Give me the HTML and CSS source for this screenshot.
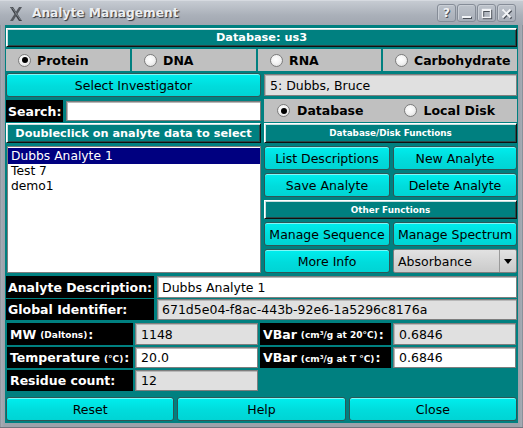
FILE: index.html
```html
<!DOCTYPE html>
<html>
<head>
<meta charset="utf-8">
<title>Analyte Management</title>
<link rel="stylesheet" href="styles.css">
</head>
<body>
<div class="window">
  <div class="titlebar">
    <svg class="appicon" width="16" height="16" viewBox="0 0 16 16">
      <path d="M2 1 L5 1 L14 15 L11 15 Z" fill="#3c4045"/>
      <path d="M11 1 L14 1 L5 15 L2 15 Z" fill="#55595f"/>
      <path d="M3 2 L4.5 2 L12.5 14" stroke="#8a9098" stroke-width="0.8" fill="none"/>
    </svg>
    <span class="title">Analyte Management</span>
    <div class="tbuttons">
      <span class="tbtn q">?</span>
      <span class="tbtn"><svg width="11" height="11" viewBox="0 0 11 11"><rect x="1" y="8" width="9" height="2" fill="#f2f4f7"/></svg></span>
      <span class="tbtn"><svg width="11" height="11" viewBox="0 0 11 11"><rect x="1.5" y="1.5" width="8" height="8" fill="none" stroke="#f2f4f7" stroke-width="1.4"/><rect x="1" y="1" width="9" height="2" fill="#f2f4f7"/></svg></span>
      <span class="tbtn"><svg width="11" height="11" viewBox="0 0 11 11"><path d="M1.5 1.5 L9.5 9.5 M9.5 1.5 L1.5 9.5" stroke="#f2f4f7" stroke-width="2"/></svg></span>
    </div>
  </div>

  <div class="content">
    <div class="banner big row-db">Database: us3</div>

    <div class="radios4 row-type">
      <div class="radio"><span class="circle on"></span>Protein</div>
      <div class="radio"><span class="circle"></span>DNA</div>
      <div class="radio"><span class="circle"></span>RNA</div>
      <div class="radio"><span class="circle"></span>Carbohydrate</div>
    </div>

    <div class="cols row-inv">
      <div class="btn">Select Investigator</div>
      <div class="field gray inv">5: Dubbs, Bruce</div>
    </div>

    <div class="cols row-search">
      <div class="search">
        <span class="lbl">Search:</span>
        <div class="field white"></div>
      </div>
      <div class="radios2">
        <div class="radio"><span class="circle on"></span>Database</div>
        <div class="radio"><span class="circle"></span>Local Disk</div>
      </div>
    </div>

    <div class="cols row-hdr">
      <div class="banner big">Doubleclick on analyte data to select</div>
      <div class="banner small">Database/Disk Functions</div>
    </div>

    <div class="cols row-main">
      <div class="list">
        <div class="item sel">Dubbs Analyte 1</div>
        <div class="item">Test 7</div>
        <div class="item">demo1</div>
      </div>
      <div class="funcs">
        <div class="btn">List Descriptions</div>
        <div class="btn">New Analyte</div>
        <div class="btn">Save Analyte</div>
        <div class="btn">Delete Analyte</div>
        <div class="banner small span2">Other Functions</div>
        <div class="btn">Manage Sequence</div>
        <div class="btn">Manage Spectrum</div>
        <div class="btn">More Info</div>
        <div class="combo"><span class="ctext">Absorbance</span><span class="carrow"><svg width="8" height="5" viewBox="0 0 8 5"><path d="M0 0 L8 0 L4 5 Z" fill="#000"/></svg></span></div>
      </div>
    </div>

    <div class="desc row-desc">
      <span class="lbl">Analyte Description:</span>
      <div class="field white">Dubbs Analyte 1</div>
    </div>
    <div class="desc row-gid">
      <span class="lbl">Global Identifier:</span>
      <div class="field gray">671d5e04-f8ac-443b-92e6-1a5296c8176a</div>
    </div>

    <div class="props">
      <span class="lbl pl">MW <span class="sm">(Daltons)</span>:</span>
      <div class="field gray">1148</div>
      <span class="lbl pl">VBar <span class="sm">(cm³/g at 20°C)</span>:</span>
      <div class="field gray">0.6846</div>

      <span class="lbl pl">Temperature <span class="sm">(°C)</span>:</span>
      <div class="field white">20.0</div>
      <span class="lbl pl">VBar <span class="sm">(cm³/g at T °C)</span>:</span>
      <div class="field white">0.6846</div>

      <span class="lbl pl">Residue count:</span>
      <div class="field gray">12</div>
    </div>

    <div class="bottom">
      <div class="btn">Reset</div>
      <div class="btn">Help</div>
      <div class="btn">Close</div>
    </div>
  </div>
</div>
</body>
</html>
```

FILE: styles.css
```css
html, body {
  margin: 0;
  padding: 0;
  background: #9ea4ad;
}

body {
  font-family: "DejaVu Sans", "Liberation Sans", sans-serif;
  font-size: 12.5px;
  color: #000;
}

.window {
  width: 523px;
  height: 428px;
  box-sizing: border-box;
  display: flex;
  flex-direction: column;
  background: linear-gradient(90deg, #7d838c 0, #a6acb5 1px, #9ca2ab 4px, #9ca2ab calc(100% - 4px), #a6acb5 calc(100% - 1px), #6f757e 100%);
  border-bottom: 1px solid #6f757e;
}

/* ---------- title bar ---------- */
.titlebar {
  height: 25px;
  flex: none;
  display: flex;
  align-items: center;
  padding: 0 7px 0 8px;
  background: linear-gradient(#c6cbd2, #aab0b9 60%, #a0a6b0);
  border-top: 1px solid #d6dae0;
  box-sizing: border-box;
}

.appicon {
  flex: none;
  margin-top: 1px;
}

.title {
  margin-left: 8px;
  font-weight: bold;
  font-size: 12.2px;
  color: #eceef1;
  text-shadow: 1px 1px 1px #2c3036;
}

.tbuttons {
  margin-left: auto;
  display: flex;
  gap: 1px;
}

.tbtn {
  box-sizing: border-box;
  width: 19px;
  height: 18px;
  border: 1px solid #858c97;
  border-radius: 3px;
  background: linear-gradient(#bcc2ca, #a8aeb8);
  box-shadow: inset 1px 1px 0 #c9ced5;
  display: flex;
  align-items: center;
  justify-content: center;
}

.tbtn svg {
  filter: drop-shadow(1px 1px 0 #4a5058);
}

.tbtn.q {
  font-weight: bold;
  font-size: 12px;
  color: #f2f4f7;
  text-shadow: 1px 1px 0 #4a5058;
}

/* ---------- content ---------- */
.content {
  flex: 1;
  margin: 0 5px 4px;
  padding: 3px 1px 2px;
  background: #008080;
  display: flex;
  flex-direction: column;
}

.banner {
  box-sizing: border-box;
  background: #008080;
  color: #fff;
  font-weight: bold;
  display: flex;
  align-items: center;
  justify-content: center;
  border: 1px solid;
  border-color: #ffffff #101010 #101010 #ffffff;
  box-shadow: inset 1px 1px 0 #c8dede, inset -1px -1px 0 #2c4a4a;
  white-space: nowrap;
}

.banner.big {
  font-size: 11.3px;
}

.banner.small {
  font-size: 8.8px;
}

.row-db {
  height: 19px;
}

.radios4 {
  margin-top: 2px;
  height: 22px;
  display: grid;
  grid-template-columns: 124px 124px 123px 1fr;
  gap: 2px;
}

.radio {
  background: #c0c0c0;
  display: flex;
  align-items: center;
  padding-left: 12px;
  font-weight: bold;
  font-size: 12.5px;
  gap: 6px;
}

.circle {
  box-sizing: border-box;
  width: 13px;
  height: 13px;
  border-radius: 50%;
  border: 1px solid #7c7c7c;
  background: radial-gradient(circle at 45% 40%, #ffffff 0, #f4f4f4 45%, #d4d4d4 100%);
  display: flex;
  align-items: center;
  justify-content: center;
  flex: none;
}

.circle.on::after {
  content: "";
  width: 6px;
  height: 6px;
  border-radius: 50%;
  background: #000;
}

.cols {
  display: grid;
  grid-template-columns: 255px 1fr;
  column-gap: 3px;
}

.row-inv {
  margin-top: 2px;
  height: 24px;
  align-items: center;
}

.btn {
  box-sizing: border-box;
  height: 24px;
  border: 1px solid #2f5656;
  border-radius: 3px;
  background: linear-gradient(#00eeee, #00dcdc 55%, #00d4d4);
  box-shadow: inset 0 1px 0 #7ff8f8;
  display: flex;
  align-items: center;
  justify-content: center;
  white-space: nowrap;
}

.field {
  box-sizing: border-box;
  border: 1px solid #7e7e7e;
  box-shadow: inset 1px 1px 0 #b8b8b8;
  display: flex;
  align-items: center;
  padding-left: 4px;
  white-space: nowrap;
  overflow: hidden;
}

.field.white {
  background: #ffffff;
}

.field.gray {
  background: #e0e0e0;
}

.field.inv {
  height: 22px;
  padding-left: 5px;
}

.row-search {
  margin-top: 3px;
  height: 21px;
}

.search {
  display: flex;
  gap: 3px;
}

.lbl {
  background: #000;
  color: #fff;
  font-weight: bold;
  font-size: 12.5px;
  display: flex;
  align-items: center;
  padding-left: 2px;
  white-space: nowrap;
}

.search .lbl {
  width: 57px;
  box-sizing: border-box;
  flex: none;
}

.search .field {
  flex: 1;
  margin: 1px 0 1px 0;
}

.radios2 {
  display: grid;
  grid-template-columns: 1fr 1fr;
  background: #c0c0c0;
  margin-top: -1px;
  height: 23px;
}

.radios2 .radio {
  padding-left: 13px;
  gap: 7px;
  font-size: 12.5px;
}

.row-hdr {
  margin-top: 2px;
  height: 20px;
}

.row-main {
  margin-top: 3px;
  height: 127px;
}

.list {
  box-sizing: border-box;
  margin-left: 1px;
  background: #fff;
  border: 1px solid #7e7e7e;
  padding: 1px 0 0 0;
}

.item {
  height: 15px;
  line-height: 15px;
  padding-left: 3px;
  font-size: 12.3px;
}

.item.sel {
  background: #000080;
  color: #fff;
  height: 16px;
  line-height: 16px;
}

.funcs {
  display: grid;
  grid-template-columns: 126px 1fr;
  grid-template-rows: 24px 24px 19px 24px 24px;
  gap: 3px;
}

.span2 {
  grid-column: 1 / 3;
}

.combo {
  box-sizing: border-box;
  border: 1px solid #7e7e7e;
  border-radius: 2px;
  background: linear-gradient(#e2e2e2, #cacaca);
  display: flex;
  align-items: center;
}

.ctext {
  flex: 1;
  padding-left: 4px;
}

.carrow {
  width: 16px;
  height: 100%;
  border-left: 1px solid #9a9a9a;
  display: flex;
  align-items: center;
  justify-content: center;
}

.desc {
  display: grid;
  grid-template-columns: 148px 1fr;
  column-gap: 3px;
}

.row-desc {
  margin-top: 3px;
  height: 22px;
}

.row-gid {
  margin-top: 1px;
  height: 21px;
}

.desc .field {
  padding-left: 4px;
}

.props {
  margin-top: 3px;
  padding: 0 1px;
  display: grid;
  grid-template-columns: 126px 123px 131px 1fr;
  grid-template-rows: 22px 21px 21px;
  column-gap: 2px;
  row-gap: 2px;
}

.lbl.pl {
  padding-left: 3px;
}

.props .field {
  padding-left: 5px;
}

.sm {
  font-size: 9px;
  margin: 0 1px 0 4px;
  position: relative;
  top: 1px;
}

.bottom {
  margin-top: 6px;
  height: 24px;
  display: grid;
  grid-template-columns: 1fr 1fr 1fr;
  gap: 3px;
}
```
